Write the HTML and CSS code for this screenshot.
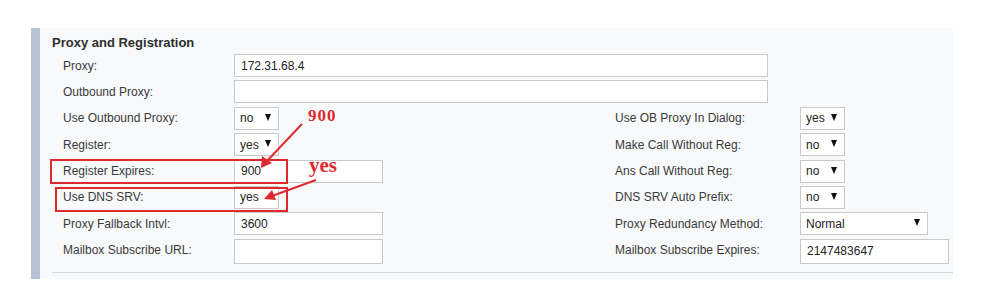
FILE: index.html
```html
<!DOCTYPE html>
<html>
<head>
<meta charset="utf-8">
<link rel="stylesheet" href="styles.css">
</head>
<body>
<div class="page">
  <section class="panel">
    <h2 class="title">Proxy and Registration</h2>
    <div class="grid">
      <div class="lbl">Proxy:</div>
      <div class="fld wide"><div class="inp w534">172.31.68.4</div></div>

      <div class="lbl">Outbound Proxy:</div>
      <div class="fld wide"><div class="inp w534"></div></div>

      <div class="lbl">Use Outbound Proxy:</div>
      <div class="fld"><div class="sel w45"><span>no</span><span class="tri"></span></div></div>
      <div class="lbl">Use OB Proxy In Dialog:</div>
      <div class="fld"><div class="sel w45"><span>yes</span><span class="tri"></span></div></div>

      <div class="lbl">Register:</div>
      <div class="fld"><div class="sel w45"><span>yes</span><span class="tri"></span></div></div>
      <div class="lbl">Make Call Without Reg:</div>
      <div class="fld"><div class="sel w45"><span>no</span><span class="tri"></span></div></div>

      <div class="lbl">Register Expires:</div>
      <div class="fld"><div class="inp w149">900</div></div>
      <div class="lbl">Ans Call Without Reg:</div>
      <div class="fld"><div class="sel w45"><span>no</span><span class="tri"></span></div></div>

      <div class="lbl">Use DNS SRV:</div>
      <div class="fld"><div class="sel w45"><span>yes</span></div></div>
      <div class="lbl">DNS SRV Auto Prefix:</div>
      <div class="fld"><div class="sel w45"><span>no</span><span class="tri"></span></div></div>

      <div class="lbl">Proxy Fallback Intvl:</div>
      <div class="fld"><div class="inp w149">3600</div></div>
      <div class="lbl">Proxy Redundancy Method:</div>
      <div class="fld"><div class="sel w128"><span>Normal</span><span class="tri"></span></div></div>

      <div class="lbl">Mailbox Subscribe URL:</div>
      <div class="fld"><div class="inp w149 tall"></div></div>
      <div class="lbl">Mailbox Subscribe Expires:</div>
      <div class="fld"><div class="inp w149 tall">2147483647</div></div>
    </div>
    <div class="rule"></div>
  </section>

  <svg class="annot" width="982" height="298" viewBox="0 0 982 298" xmlns="http://www.w3.org/2000/svg">
    <rect x="51" y="160" width="236" height="23" fill="none" stroke="#dd2a2f" stroke-width="2"/>
    <rect x="56" y="188" width="231" height="23" fill="none" stroke="#dd2a2f" stroke-width="2"/>
    <line x1="302" y1="124" x2="266" y2="162" stroke="#dd2a2f" stroke-width="2"/>
    <polygon points="261,168 262,156 272,163" fill="#dd2a2f"/>
    <line x1="316" y1="180" x2="272" y2="196" stroke="#dd2a2f" stroke-width="2"/>
    <polygon points="264,199 272,190 276,200" fill="#dd2a2f"/>
  </svg>
  <div class="note n900">900</div>
  <div class="note nyes">yes</div>
</div>
</body>
</html>
```

FILE: styles.css
```css
html, body {
  margin: 0;
  padding: 0;
  background: #ffffff;
}

.page {
  position: relative;
  width: 982px;
  height: 298px;
  padding: 28px 0 0 31px;
  box-sizing: border-box;
  font-family: "Liberation Sans", Arial, sans-serif;
  font-size: 12px;
  color: #333333;
}

.panel {
  width: 922px;
  box-sizing: border-box;
  background: #f8f9fb;
  border-left: 9px solid #b7c1d6;
  padding: 7px 0 6px 0;
}

.title {
  margin: 0 0 4px 12px;
  font-size: 13px;
  line-height: 15px;
  font-weight: bold;
  color: #2f2f2f;
}

.grid {
  display: grid;
  grid-template-columns: 171px 381px 185px 1fr;
  grid-auto-rows: 23px;
  row-gap: 3.4px;
  margin-left: 23px;
}

.lbl {
  display: flex;
  align-items: center;
  white-space: nowrap;
  color: #3a3a3a;
}

.fld {
  display: flex;
  align-items: flex-start;
}

.wide {
  grid-column: 2 / 5;
}

.inp, .sel {
  height: 23px;
  box-sizing: border-box;
  background: #ffffff;
  border: 1px solid #c9c9c9;
  display: flex;
  align-items: center;
  padding-left: 6px;
  color: #222222;
  white-space: nowrap;
}

.tall {
  height: 25px;
}

.sel {
  justify-content: space-between;
  padding-left: 5px;
  padding-right: 7px;
}

.tri {
  width: 0;
  height: 0;
  border-left: 3px solid transparent;
  border-right: 3px solid transparent;
  border-top: 7px solid #111111;
  margin-top: -2px;
}

.w534 { width: 534px; }
.w45 { width: 45px; }
.w128 { width: 128px; }
.w149 { width: 149px; }

.rule {
  margin: 10px 0 0 12px;
  height: 1px;
  background: #d3d7df;
}

.annot {
  position: absolute;
  left: 0;
  top: 0;
  pointer-events: none;
}

.note {
  position: absolute;
  font-family: "Liberation Serif", "DejaVu Serif", serif;
  font-weight: bold;
  color: #dd2a2f;
}

.n900 {
  left: 308px;
  top: 106px;
  font-size: 17px;
  letter-spacing: 1px;
}

.nyes {
  left: 309px;
  top: 153px;
  font-size: 21px;
}
```
